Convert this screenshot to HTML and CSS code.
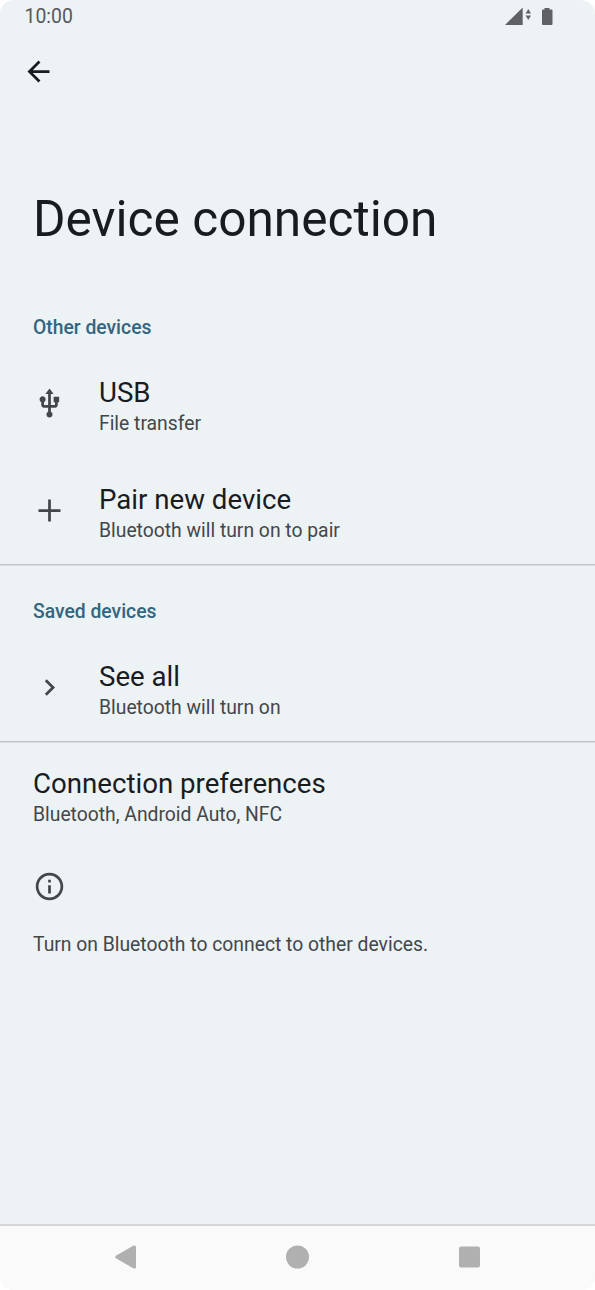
FILE: index.html
```html
<!DOCTYPE html>
<html lang="en">
<head>
<meta charset="utf-8">
<title>Device connection</title>
<link rel="stylesheet" href="styles.css">
</head>
<body>
<div class="screen">
  <header class="status">
    <span class="clock">10:00</span>
    <svg class="status-icons" width="50" height="20" viewBox="0 0 50 20"><path d="M0 19H17.7V1.5Z"/><path d="M20.6 7.4H26L23.3 3Z"/><path d="M20.6 9.5H26L23.3 14Z"/><path d="M39.5 2H44.5V3.5H46.5Q47.5 3.500 47.5 4.500V18Q47.500 19 46.500 19H38Q37 19 37 18V4.500Q37 3.500 38 3.500H39.500Z"/></svg>
  </header>
  <nav class="toolbar">
    <svg class="icon back" viewBox="0 0 24 24"><path d="M20 11H7.830l5.590-5.590L12 4l-8 8 8 8 1.410-1.410L7.830 13H20z"/></svg>
  </nav>
  <h1 class="title">Device connection</h1>
  <main class="list">
    <section>
      <h2 class="category">Other devices</h2>
      <div class="row">
        <svg class="icon" viewBox="0 0 24 24"><path d="M15 7v4h1v2h-3V5h2l-3-4-3 4h2v8H8v-2.070c.7-.37 1.200-1.080 1.200-1.930 0-1.210-.99-2.200-2.200-2.200S4.800 7.790 4.800 9c0 .85.500 1.560 1.200 1.930V13c0 1.110.89 2 2 2h3v3.050c-.71.37-1.200 1.100-1.200 1.950 0 1.220.99 2.200 2.200 2.200s2.200-.98 2.200-2.200c0-.85-.49-1.580-1.200-1.950V15h3c1.110 0 2-.89 2-2v-2h1V7z"/></svg>
        <div class="text"><div class="name">USB</div><div class="summary">File transfer</div></div>
      </div>
      <div class="row">
        <svg class="icon" viewBox="0 0 24 24"><path d="M20 13h-7v7h-2v-7H4v-2h7V4h2v7h7z"/></svg>
        <div class="text"><div class="name">Pair new device</div><div class="summary">Bluetooth will turn on to pair</div></div>
      </div>
    </section>
    <section class="divided">
      <h2 class="category">Saved devices</h2>
      <div class="row">
        <svg class="icon" viewBox="0 0 24 24"><path d="M10 6L8.590 7.410 13.170 12l-4.580 4.590L10 18l6-6z"/></svg>
        <div class="text"><div class="name">See all</div><div class="summary">Bluetooth will turn on</div></div>
      </div>
    </section>
    <section class="divided">
      <div class="row">
        <div class="text"><div class="name">Connection preferences</div><div class="summary">Bluetooth, Android Auto, NFC</div></div>
      </div>
      <div class="footer">
        <svg class="icon" viewBox="0 0 24 24"><path d="M11 7h2v2h-2zm0 4h2v6h-2zm1-9C6.480 2 2 6.480 2 12s4.480 10 10 10 10-4.480 10-10S17.520 2 12 2zm0 18c-4.410 0-8-3.590-8-8s3.590-8 8-8 8 3.590 8 8-3.590 8-8 8z"/></svg>
        <p class="summary">Turn on Bluetooth to connect to other devices.</p>
      </div>
    </section>
  </main>
  <footer class="navbar">
    <svg width="24" height="24" viewBox="0 0 24 24"><path d="M2.300 10.600L19.200 .8Q22 -.2 22 2V22Q22 24.200 19.200 23.200L2.300 13.400Q0 12 2.300 10.600Z"/></svg>
    <svg width="24" height="24" viewBox="0 0 24 24"><circle cx="11.500" cy="12" r="11.500"/></svg>
    <svg width="24" height="24" viewBox="0 0 24 24"><rect x="1" y="1.500" width="21" height="21" rx="2"/></svg>
  </footer>
</div>
</body>
</html>
```
FILE: styles.css
```css
* { box-sizing: border-box; }
body { margin: 0; background: #fff; font-family: Roboto, sans-serif; }
h1, h2, p { margin: 0; }
svg { display: block; flex: none; }
.screen {
  display: flex;
  flex-direction: column;
  width: 595px;
  height: 1290px;
  overflow: hidden;
  border-radius: 14px;
  background: #edf2f5;
  color: #191c1e;
}
.status {
  display: flex;
  justify-content: space-between;
  height: 33px;
  padding: 6px 40px 0 24.5px;
}
.clock { font-size: 19.4px; line-height: 21px; font-weight: 400; color: #55585b; }
.status-icons { fill: #5f6165; }
.toolbar { height: 77px; padding: 22px; }
.icon { width: 33px; height: 33px; fill: #42474b; }
.icon.back { fill: #191c1e; }
.title {
  height: 170px;
  padding: 79px 33px 0;
  font-size: 49.6px;
  line-height: 60px;
  font-weight: 400;
}
.list { flex: 1; }
.divided { box-shadow: inset 0 1.500px #c1c5c9; }
.category {
  height: 70px;
  padding: 36px 33px 0;
  font-size: 19.32px;
  line-height: 23px;
  font-weight: 500;
  color: #34657f;
}
.row {
  display: flex;
  align-items: center;
  gap: 33px;
  height: 107px;
  padding: 0 33px;
}
.text { padding-top: 4px; }
.name { font-size: 27.65px; line-height: 37px; }
.summary { font-size: 19.32px; line-height: 26px; color: #42474b; }
.footer { padding: 22px 33px; }
.footer .summary { padding-top: 29px; }
.navbar {
  display: flex;
  justify-content: center;
  gap: 148px;
  height: 66px;
  padding-top: 19px;
  border-top: 2px solid #d5d5da;
  background: #fafafa;
}
.navbar svg { fill: #b0b0b0; }
```
